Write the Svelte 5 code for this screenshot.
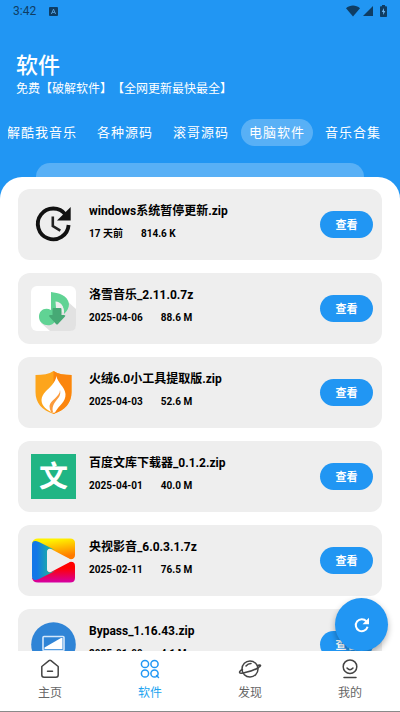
<script>
	let tabs = ['破解酷我音乐', '各种源码', '滚哥源码', '电脑软件', '音乐合集'];
	let activeTab = '电脑软件';

	let files = [
		{ icon: 'clock', name: 'windows系统暂停更新.zip', date: '17 天前', size: '814.6 K' },
		{ icon: 'music', name: '洛雪音乐_2.11.0.7z', date: '2025-04-06', size: '88.6 M' },
		{ icon: 'shield', name: '火绒6.0小工具提取版.zip', date: '2025-04-03', size: '52.6 M' },
		{ icon: 'wenku', name: '百度文库下载器_0.1.2.zip', date: '2025-04-01', size: '40.0 M' },
		{ icon: 'video', name: '央视影音_6.0.3.1.7z', date: '2025-02-11', size: '76.5 M' },
		{ icon: 'bypass', name: 'Bypass_1.16.43.zip', date: '2025-01-09', size: '4.1 M' }
	];

	let pages = [
		{ icon: 'home', label: '主页' },
		{ icon: 'apps', label: '软件' },
		{ icon: 'planet', label: '发现' },
		{ icon: 'me', label: '我的' }
	];
	let activePage = '软件';
</script>

<div class="app">
	<header class="header">
		<div class="status">
			<span class="status__time">3:42</span>
			<svg class="status__badge" width="9" height="9" viewBox="0 0 9 9" aria-hidden="true">
				<rect width="9" height="9" rx="1" fill="#0f3d63" />
				<path d="M2.4 7L4.5 2.2L6.6 7M3.2 5.4H5.8" fill="none" stroke="#5aa6e4" stroke-width="0.9" />
			</svg>
			<svg class="status__wifi" width="14" height="12" viewBox="0 0 14 12" aria-hidden="true">
				<path d="M0 3.2C4 -0.4 10 -0.4 14 3.2L7 11.4Z" fill="#0f3d63" />
			</svg>
			<svg width="10" height="10" viewBox="0 0 10 10" aria-hidden="true">
				<path d="M10 0V10H0Z" fill="#0f3d63" />
			</svg>
			<svg class="status__battery" width="7" height="12" viewBox="0 0 7 12" aria-hidden="true">
				<path d="M2 0H5V1.2H6.2Q7 1.2 7 2V11.2Q7 12 6.2 12H0.8Q0 12 0 11.2V2Q0 1.2 0.8 1.2H2Z" fill="#0f3d63" />
				<path d="M4 3L1.8 7H3.2V10L5.3 6H4Z" fill="#6db6f2" />
			</svg>
		</div>
		<h1 class="title">软件</h1>
		<p class="subtitle">免费【破解软件】【全网更新最快最全】</p>
		<nav class="tabs">
			{#each tabs as tab}
				<button class="tab" class:tab--active={tab === activeTab} on:click={() => (activeTab = tab)}>{tab}</button>
			{/each}
		</nav>
		<div class="backdrop"></div>
	</header>

	<main class="sheet">
		<ul class="list">
			{#each files as file}
				<li class="card">
					<svg class="card__icon" viewBox="0 0 45 45" aria-hidden="true">
						{#if file.icon === 'clock'}
							<path d="M34.6 12.7A15.4 15.4 0 1 0 37.6 23" fill="none" stroke="#111" stroke-width="3.8" />
							<path d="M39.7 5V18.6H26Z" fill="#111" />
							<path d="M21.8 14.5V24L29.3 28.6" fill="none" stroke="#222" stroke-width="2.6" />
						{:else if file.icon === 'music'}
							<rect width="45" height="45" rx="6" fill="#fff" />
							<path d="M37 16L45 23V39Q45 45 39 45H19L10 37Z" fill="#e2e2e2" />
							<path d="M20 6C27 7 37 9 38 18C38 22 36 25 33 28C33 20 30 17 25 16V31C25 43 8 41 8 31C8 24 14 21 20 24Z" fill="#60d394" />
							<path d="M24.5 15.5C30 16 33 20 33 27L25 22Z" fill="#eee" />
							<path d="M21.5 23Q21.5 22 22.5 22H29.5Q30.5 22 30.5 23V29H33Q35 29 34 30.5L27 38Q26 39 25 38L18.3 30.5Q17.5 29 19 29H21.5Z" fill="#46a975" />
						{:else if file.icon === 'shield'}
							<path d="M22.5 1C27 4 33 5 40.5 5V22C40.5 33 34 40 22.5 44C11 40 4.5 33 4.5 22V5C12 5 18 4 22.5 1Z" fill="#fda51c" />
							<path d="M22.5 1C27 4 33 5 40.5 5V22C40.5 33 34 40 22.5 44Z" fill="#fb850e" />
							<path d="M25.5 6C26 12 34 17 34.5 24C35 32 28 35 24 42.5L22 43C16 40 10.5 36 10.5 30C11 23 17 20 21 15C23.5 12 25 9 25.5 6Z" fill="#fff" />
							<path d="M29 20C29 27 19 30 18.5 36Q18.500 39 20 42L22.500 43C20 38 23 33 26 29.500C28.500 27 30 24 29 20Z" fill="#fb9b3d" />
						{:else if file.icon === 'wenku'}
							<rect width="45" height="45" fill="#20b584" />
							<text class="wenku" x="22.5" y="33" text-anchor="middle">文</text>
						{:else if file.icon === 'video'}
							<defs>
								<linearGradient id="videoTop" x1="0" y1="0" x2="0.3" y2="1">
									<stop offset="0.2" stop-color="#fff200" />
									<stop offset="1" stop-color="#ff7a00" />
								</linearGradient>
								<linearGradient id="videoBottom" x1="0" y1="0" x2="0" y2="1">
									<stop offset="0.3" stop-color="#f00" />
									<stop offset="1" stop-color="#d500a5" />
								</linearGradient>
								<linearGradient id="videoLeft" x1="0" y1="0" x2="1" y2="0">
									<stop offset="0.2" stop-color="#1277e8" />
									<stop offset="1" stop-color="#20c58a" />
								</linearGradient>
							</defs>
							<path d="M1 5Q2 0.5 7 0.5H39Q44 0.5 44 5V17Q44 22 38 21L20 13Z" fill="url(#videoTop)" />
							<path d="M1 40Q2 44.5 7 44.5H39Q44 44.5 44 40V28Q44 23 38 24L20 32Z" fill="url(#videoBottom)" />
							<path d="M1 7Q1 1 8 4L24 12Q16 9 16 14V31Q16 36 24 33L8 41Q1 44 1 38Z" fill="url(#videoLeft)" />
							<path d="M16.5 14Q16.5 10 20 11L38 20.500Q42 22.500 38 24.500L20 34Q16.5 35 16.5 31Z" fill="#eee" />
						{:else}
							<circle cx="22.5" cy="22.5" r="22.3" fill="#2f84d6" />
							<rect x="12" y="14.5" width="21" height="14" rx="1" fill="#2f84d6" stroke="#d4e7fa" stroke-width="1.6" />
							<path d="M13.5 27V25.5L30 16H31.5V27Z" fill="#fff" />
							<path d="M17 31H28" stroke="#fff" stroke-width="3" />
						{/if}
					</svg>
					<div class="card__text">
						<h2 class="card__name">{file.name}</h2>
						<p class="card__meta"><span>{file.date}</span><span>{file.size}</span></p>
					</div>
					<button class="card__view">查看</button>
				</li>
			{/each}
		</ul>
		<button class="refresh" aria-label="刷新">
			<svg width="16" height="16" viewBox="0 0 16 16" aria-hidden="true">
				<path d="M12.4 4.3A6 6 0 1 0 13.6 9.8" fill="none" stroke="#fff" stroke-width="2" />
				<path d="M15 0.8V7.2H8.5Z" fill="#fff" />
			</svg>
		</button>
	</main>

	<nav class="bottom">
		{#each pages as page}
			<button class="bottom__item" class:bottom__item--active={page.label === activePage} on:click={() => (activePage = page.label)}>
				<svg class="bottom__icon" viewBox="0 0 24 20" aria-hidden="true">
					{#if page.icon === 'home'}
						<path d="M3.8 7.5L11 1.6Q12 1 13 1.6L20.2 7.5V16Q20.2 18.2 18 18.2H6Q3.8 18.2 3.8 16ZM9.5 12.3H14.5" />
					{:else if page.icon === 'apps'}
						<circle cx="7" cy="5" r="3.6" />
						<circle cx="16.5" cy="5" r="3.6" />
						<circle cx="7" cy="14.5" r="3.6" />
						<circle cx="16.5" cy="14.5" r="3.6" />
						<path d="M18.5 16.5L20.5 18.5" />
					{:else if page.icon === 'planet'}
						<circle cx="12" cy="10" r="8" />
						<path d="M8 7Q10 4.5 13 4.5M4.5 10.5Q0.5 12.5 2 14Q4 14.5 8 13.2Q15 12 20.5 8.5Q24 6 21.5 6L19.5 6.5" />
					{:else}
						<circle cx="12" cy="7.7" r="6.8" />
						<path d="M9 9Q12 12.5 15 9M6 18.5H18" />
					{/if}
				</svg>
				<span>{page.label}</span>
			</button>
		{/each}
	</nav>
</div>

<style>
	:global(body) {
		background: #2196f3;
	}

	.app {
		display: flex;
		flex-direction: column;
		height: 100vh;
		overflow: hidden;
		font-family: Roboto, 'Noto Sans CJK SC', sans-serif;
		background: #2196f3;
	}

	button {
		padding: 0;
		border: 0;
		background: none;
		font-family: inherit;
		cursor: pointer;
	}

	h1, h2, p, ul {
		margin: 0;
		padding: 0;
	}

	.header {
		flex: none;
		color: #fff;
	}

	.status {
		display: flex;
		align-items: center;
		height: 22px;
		padding: 0 13px;
		color: #0f3d63;
	}
	.status__time {
		font-size: 12px;
	}
	.status__badge {
		margin-left: 13px;
	}
	.status__wifi {
		margin-left: auto;
		margin-right: 3px;
	}
	.status__battery {
		margin-left: 7px;
	}

	.title {
		margin-top: 30px;
		padding: 0 16px;
		font-size: 22px;
		font-weight: 500;
		line-height: 28px;
	}
	.subtitle {
		padding: 0 16px;
		font-size: 12px;
		line-height: 18px;
		white-space: nowrap;
		text-spacing-trim: space-all;
	}

	.tabs {
		display: flex;
		justify-content: flex-end;
		gap: 4px;
		margin: 21px 11px 17px 8px;
		overflow: hidden;
	}
	.tab {
		flex: none;
		height: 27px;
		padding: 0 8px 2px;
		border-radius: 14px;
		color: #fff;
		font-size: 13px;
		letter-spacing: 1px;
		white-space: nowrap;
	}
	.tab--active {
		background: rgba(255, 255, 255, 0.25);
	}

	.backdrop {
		height: 14px;
		margin: 0 36px;
		border-radius: 18px 18px 0 0;
		background: rgba(255, 255, 255, 0.25);
	}

	.sheet {
		position: relative;
		flex: 1;
		min-height: 0;
		overflow: hidden;
		border-radius: 22px 22px 0 0;
		background: #fff;
	}

	.list {
		display: flex;
		flex-direction: column;
		gap: 13px;
		padding: 12px 18px;
		list-style: none;
	}

	.card {
		display: flex;
		align-items: center;
		gap: 13px;
		padding: 13px 9px 13px 13px;
		border-radius: 12px;
		background: #eee;
	}
	.card__icon {
		flex: none;
		width: 45px;
		height: 45px;
	}
	.card__text {
		flex: 1;
		align-self: flex-start;
		min-width: 0;
		color: #000;
	}
	.card__name {
		font-size: 12px;
		font-weight: 700;
		line-height: 18px;
		white-space: nowrap;
	}
	.card__meta {
		display: flex;
		gap: 18px;
		margin-top: 6px;
		font-size: 10px;
		font-weight: 700;
		line-height: 16px;
	}
	.card__view {
		flex: none;
		width: 53px;
		height: 27px;
		padding-bottom: 2px;
		border-radius: 14px;
		background: #2196f3;
		color: #fff;
		font-size: 11px;
		font-weight: 700;
	}

	.wenku {
		fill: #fff;
		font-size: 29px;
		font-weight: 700;
	}

	.refresh {
		position: absolute;
		right: 12px;
		bottom: 0;
		display: flex;
		align-items: center;
		justify-content: center;
		width: 53px;
		height: 53px;
		border-radius: 50%;
		background: #2196f3;
		box-shadow: 0 3px 6px rgba(0, 0, 0, 0.3);
	}

	.bottom {
		display: flex;
		flex: none;
		height: 60px;
		border-bottom: 1px solid #8a8a8a;
		background: #fff;
	}
	.bottom__item {
		display: flex;
		flex: 1;
		flex-direction: column;
		align-items: center;
		gap: 5px;
		padding-top: 8px;
		color: #666;
		font-size: 12px;
		line-height: 18px;
	}
	.bottom__item--active {
		color: #1ca4f0;
	}
	.bottom__icon {
		width: 24px;
		height: 20px;
		fill: none;
		stroke: #444;
		stroke-width: 1.5px;
		stroke-linecap: round;
		stroke-linejoin: round;
	}
	.bottom__item--active .bottom__icon {
		stroke: #2196f3;
	}
</style>
